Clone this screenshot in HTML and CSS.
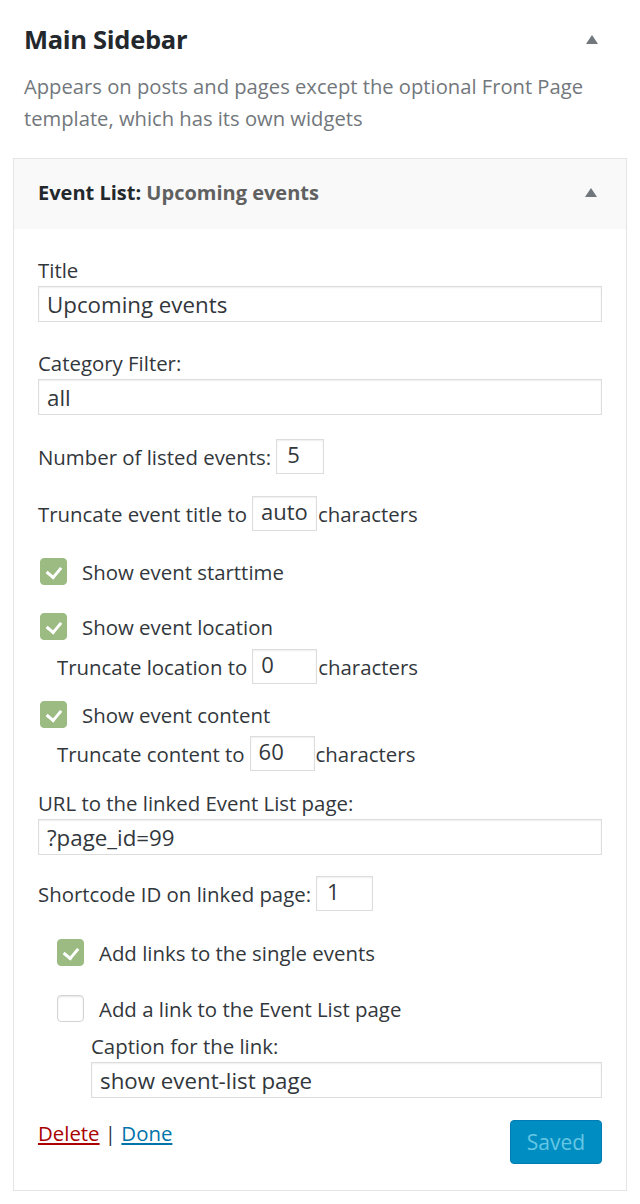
FILE: index.html
```html
<!DOCTYPE html>
<html lang="en">
<head>
<meta charset="utf-8">
<title>Main Sidebar</title>
<link rel="stylesheet" href="styles.css">
</head>
<body>
<div class="sidebar">
  <div class="sidebar-head">
    <h2 class="sidebar-title">Main Sidebar</h2>
    <span class="arrow"></span>
  </div>
  <p class="desc">Appears on posts and pages except the optional Front Page template, which has its own widgets</p>

  <div class="widget">
    <div class="widget-top">
      <h3 class="widget-title">Event List<span class="colon">:</span> <span class="in-title">Upcoming events</span></h3>
      <span class="arrow"></span>
    </div>
    <div class="widget-inside">
      <div class="field">
        <label class="lbl">Title</label>
        <input class="wide" type="text" value="Upcoming events">
      </div>
      <div class="field m29">
        <label class="lbl">Category Filter:</label>
        <input class="wide" type="text" value="all">
      </div>
      <div class="row m25">
        <span>Number of listed events:</span>
        <input class="small w48" type="text" value="5">
      </div>
      <div class="row m22">
        <span>Truncate event title to</span>
        <input class="small w65 auto" type="text" value="auto">
        <span class="after">characters</span>
      </div>
      <div class="check-row m26">
        <span class="cb checked"></span>
        <span>Show event starttime</span>
      </div>
      <div class="check-row m28">
        <span class="cb checked"></span>
        <span>Show event location</span>
      </div>
      <div class="row sub m10">
        <span>Truncate location to</span>
        <input class="small w65" type="text" value="0">
        <span class="after">characters</span>
      </div>
      <div class="check-row m16">
        <span class="cb checked"></span>
        <span>Show event content</span>
      </div>
      <div class="row sub m9">
        <span>Truncate content to</span>
        <input class="small w65" type="text" value="60">
        <span class="after">characters</span>
      </div>
      <div class="field m19">
        <label class="lbl">URL to the linked Event List page:</label>
        <input class="wide" type="text" value="?page_id=99">
      </div>
      <div class="row m22">
        <span>Shortcode ID on linked page:</span>
        <input class="small w57" type="text" value="1">
      </div>
      <div class="check-row sub2 m27">
        <span class="cb checked"></span>
        <span>Add links to the single events</span>
      </div>
      <div class="check-row sub2 m29">
        <span class="cb"></span>
        <span>Add a link to the Event List page</span>
      </div>
      <div class="field caption m12">
        <label class="lbl">Caption for the link:</label>
        <input class="wide" type="text" value="show event-list page">
      </div>
      <div class="actions">
        <div class="links"><a class="delete" href="#">Delete</a> | <a class="done" href="#">Done</a></div>
        <button class="saved" type="button" disabled>Saved</button>
      </div>
    </div>
  </div>
</div>
</body>
</html>
```
FILE: styles.css
```css
* { box-sizing: border-box; }
body {
  margin: 0;
  background: #fff;
  font-family: "Open Sans", "Noto Sans", sans-serif;
  color: #32373c;
  font-size: 20.4px;
}
.sidebar { padding: 0 13px; }
.sidebar-head {
  display: flex;
  align-items: center;
  justify-content: space-between;
  height: 80px;
  padding: 0 29px 2px 11px;
}
.sidebar-title {
  margin: 0;
  font-size: 25.5px;
  font-weight: 700;
  color: #23282d;
  letter-spacing: -0.3px;
}
.arrow {
  width: 0;
  height: 0;
  border-left: 6px solid transparent;
  border-right: 6px solid transparent;
  border-bottom: 9px solid #72777c;
}
.desc {
  margin: -10px 0 24px;
  padding: 0 11px;
  line-height: 32px;
  color: #72777c;
  font-size: 20.2px;
}
.widget {
  border: 1px solid #e5e5e5;
  background: #fff;
}
.widget-top {
  display: flex;
  align-items: center;
  justify-content: space-between;
  height: 70px;
  padding: 0 29px 3px 24px;
  background: #f9f9f9;
}
.widget-title {
  margin: 0;
  font-size: 20px;
  font-weight: 700;
  color: #23282d;
}
.in-title { color: #606060; }
.widget-inside {
  padding: 29px 24px 26px;
}
.field { display: flex; flex-direction: column; }
.lbl { line-height: 24px; }
input {
  font-family: inherit;
  color: #32373c;
  border: 1px solid #ddd;
  box-shadow: inset 0 1px 2px rgba(0,0,0,.07);
  background: #fff;
  margin: 0;
  outline: none;
}
.wide {
  height: 36px;
  margin-top: 4px;
  padding: 0 8px;
  font-size: 22.3px;
  width: 100%;
}
.row {
  display: flex;
  align-items: center;
  height: 35px;
  padding-bottom: 2px;
}
.small {
  height: 35px;
  padding: 0 8px 5px;
  font-size: 22px;
  margin-left: 5px;
}
.w48 { width: 48px; padding-left: 10px; }
.w57 { width: 57px; padding-left: 10px; }
.w65 { width: 65px; }
.after { margin-left: 1px; }
.sub { padding-left: 19px; }
.check-row {
  display: flex;
  align-items: center;
  height: 27px;
  padding-left: 2px;
}
.check-row.sub2 { padding-left: 19px; }
.cb {
  width: 27px;
  height: 27px;
  border-radius: 4px;
  margin-right: 15px;
  flex: none;
  border: 1px solid #d4d4d4;
  background: #fff;
  box-shadow: inset 0 1px 2px rgba(0,0,0,.1);
  position: relative;
}
.cb.checked {
  background: #9bbb82;
  border-color: #9bbb82;
  box-shadow: none;
}
.cb.checked::after {
  content: "";
  position: absolute;
  left: 8px;
  top: 5px;
  width: 7px;
  height: 11px;
  border-right: 3px solid #fff;
  border-bottom: 3px solid #fff;
  transform: rotate(40deg);
}
.caption { padding-left: 53px; }
.actions {
  display: flex;
  justify-content: space-between;
  align-items: flex-start;
  margin-top: 22px;
}
.links { line-height: 24px; padding-top: 1px; color: #32373c; }
.delete { color: #a00; }
.done { color: #0073aa; }
.saved {
  width: 92px;
  height: 44px;
  border-radius: 4px;
  border: 1px solid #007cb2;
  background: #008ec2;
  color: #66c6e4;
  font-family: inherit;
  font-size: 21px;
}
.m9 { margin-top: 9px; }
.m10 { margin-top: 10px; }
.m12 { margin-top: 12px; }
.m16 { margin-top: 16px; }
.m19 { margin-top: 19px; }
.m22 { margin-top: 22px; }
.m25 { margin-top: 25px; }
.m26 { margin-top: 26px; }
.m27 { margin-top: 27px; }
.m28 { margin-top: 28px; }
.m29 { margin-top: 29px; }
```
